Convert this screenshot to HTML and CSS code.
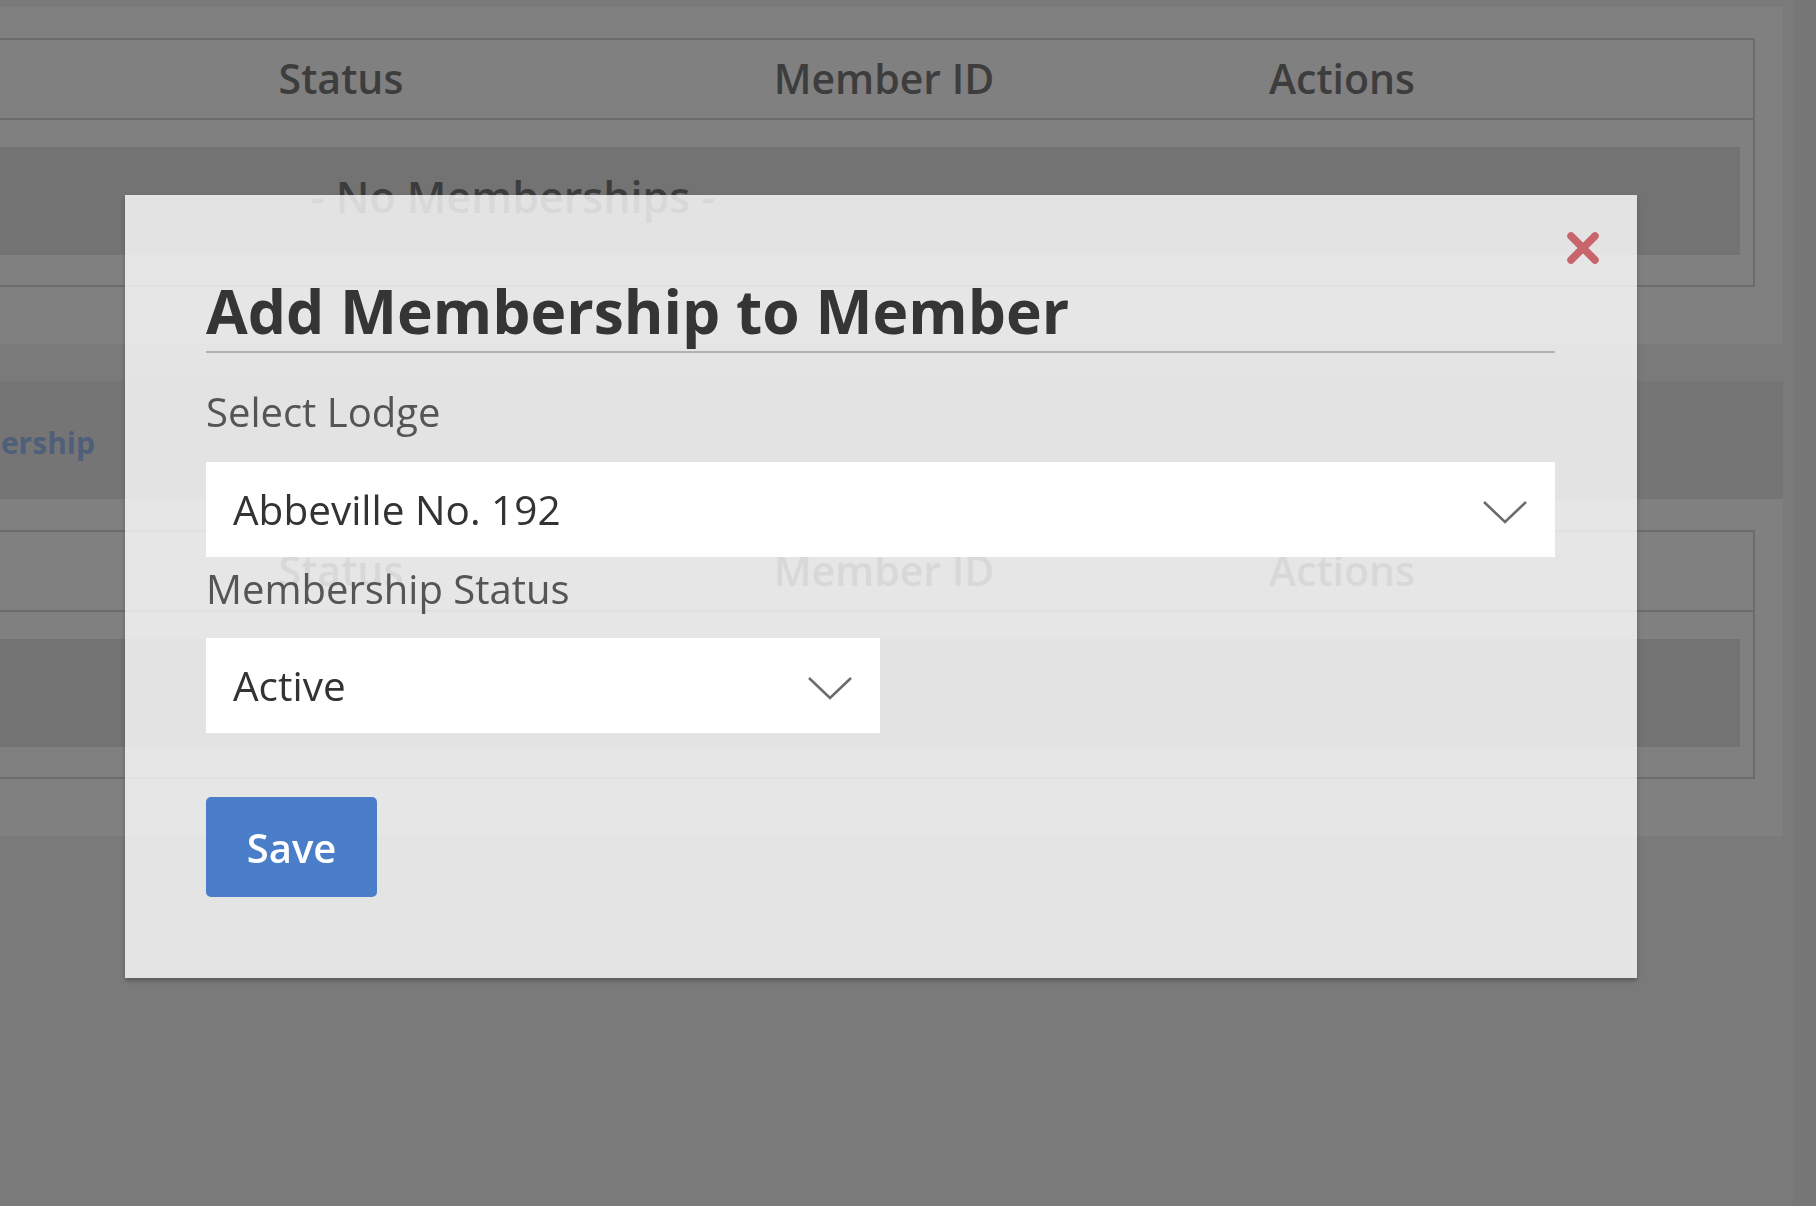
FILE: index.html
```html
<!DOCTYPE html>
<html lang="en">
<head>
    <meta charset="UTF-8">
    <meta name="viewport" content="width=device-width, initial-scale=1.0">
    <title>Member Memberships</title>
    <link rel="stylesheet" href="styles.css">
</head>
<body>
    <div class="page">
        <!-- Memberships table -->
        <div class="panel">
            <div class="table">
                <div class="table-head">
                    <div class="th">Status</div>
                    <div class="th">Member ID</div>
                    <div class="th">Actions</div>
                    <div class="th"></div>
                </div>
                <div class="table-body">
                    <div class="empty-row"><span class="empty-text">- No Memberships -</span></div>
                </div>
            </div>
        </div>

        <div class="tab-bar">
            <a class="tab-link" href="#">Add Membership</a>
        </div>

        <div class="panel">
            <div class="table">
                <div class="table-head">
                    <div class="th">Status</div>
                    <div class="th">Member ID</div>
                    <div class="th">Actions</div>
                    <div class="th"></div>
                </div>
                <div class="table-body">
                    <div class="empty-row"></div>
                </div>
            </div>
        </div>
    </div>

    <!-- Add membership modal -->
    <div class="overlay">
        <div class="modal">
            <button class="close-btn" aria-label="Close">
                <svg width="34" height="32" viewBox="0 0 34 32">
                    <path d="M5 4 L29 28 M29 4 L5 28" stroke="#c8646c" stroke-width="7.5" stroke-linecap="round"/>
                </svg>
            </button>
            <h2 class="modal-title">Add Membership to Member</h2>

            <label class="field-label" for="lodge">Select Lodge</label>
            <div class="select select-wide" id="lodge">
                <span>Abbeville No. 192</span>
                <svg class="chevron" width="46" height="26" viewBox="0 0 46 26">
                    <polyline points="2,3 23,23 44,3" fill="none" stroke="#6b6b6b" stroke-width="2.5"/>
                </svg>
            </div>

            <label class="field-label label-status" for="status">Membership Status</label>
            <div class="select select-half" id="status">
                <span>Active</span>
                <svg class="chevron" width="46" height="26" viewBox="0 0 46 26">
                    <polyline points="2,3 23,23 44,3" fill="none" stroke="#6b6b6b" stroke-width="2.5"/>
                </svg>
            </div>

            <button class="save-btn">Save</button>
        </div>
    </div>
</body>
</html>
```

FILE: styles.css
```css
body {
    margin: 0;
    background: #777777;
    font-family: "Open Sans", "Liberation Sans", sans-serif;
    overflow: hidden;
    height: 1206px;
}
.page {
    width: 1793px;
    height: 1206px;
    padding-top: 7px;
    box-sizing: border-box;
    background: #7a7a7a;
}
.panel {
    width: 1783px;
    box-sizing: border-box;
    background: #808080;
    padding: 31px 28px 57px 0;
}
.table {
    border: 2px solid #6c6c6c;
    border-left: none;
}
.table-head {
    display: grid;
    grid-template-columns: 682px 404px 512px 1fr;
    height: 78px;
    border-bottom: 2px solid #6c6c6c;
    align-items: center;
}
.th {
    text-align: center;
    font-size: 41px;
    font-weight: 600;
    color: #3d3d3d;
    margin-top: -3px;
}
.table-body {
    padding: 27px 13px 30px 0;
}
.empty-row {
    height: 108px;
    background: #737373;
    display: flex;
    align-items: center;
}
.empty-text {
    width: 1026px;
    text-align: center;
    font-size: 43px;
    font-weight: 600;
    color: #3c3c3c;
    margin-top: -10px;
}
.tab-bar {
    width: 1783px;
    margin-top: 37px;
    height: 118px;
    background: #757575;
    display: flex;
    align-items: center;
}
.tab-link {
    width: 95px;
    display: flex;
    justify-content: flex-end;
    overflow: hidden;
    white-space: nowrap;
    font-size: 30px;
    font-weight: 700;
    color: #4f5f7a;
    text-decoration: none;
    margin-top: 4px;
}

.overlay {
    position: fixed;
    top: 0;
    left: 0;
    right: 0;
    bottom: 0;
}
.modal {
    position: relative;
    margin: 195px 0 0 125px;
    width: 1512px;
    box-sizing: border-box;
    padding: 83px 82px 81px 81px;
    background: rgba(255, 255, 255, 0.8);
    box-shadow: 0 3px 4px rgba(0, 0, 0, 0.25);
}
.close-btn {
    position: absolute;
    top: 37px;
    right: 37px;
    padding: 0;
    border: none;
    background: none;
    line-height: 0;
}
.modal-title {
    margin: 0;
    font-size: 60.5px;
    line-height: 66px;
    font-weight: 700;
    color: #353535;
    padding-bottom: 7px;
    border-bottom: 2px solid #b2b2b2;
}
.field-label {
    display: block;
    margin: 31px 0 22px;
    font-size: 40px;
    line-height: 56px;
    color: #555555;
}
.label-status {
    margin: 4px 0 21px;
}
.select {
    height: 95px;
    box-sizing: border-box;
    background: #ffffff;
    display: flex;
    align-items: center;
    justify-content: space-between;
    padding: 4px 27px 0 27px;
    font-size: 40.5px;
    line-height: 56px;
    color: #333333;
}
.select span {
    margin-top: -4px;
}
.select-half {
    width: 674px;
}
.save-btn {
    display: block;
    margin-top: 64px;
    width: 171px;
    height: 100px;
    border: none;
    border-radius: 5px;
    background: #4a7ec9;
    color: #ffffff;
    font-family: "Open Sans", "Liberation Sans", sans-serif;
    font-size: 40px;
    font-weight: 600;
}
```
